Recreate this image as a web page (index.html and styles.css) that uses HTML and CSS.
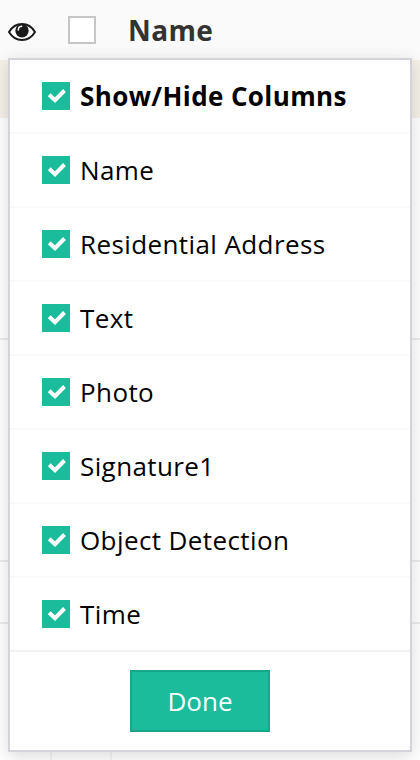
FILE: index.html
```html
<!DOCTYPE html>
<html lang="en">
<head>
<meta charset="utf-8">
<title>Columns</title>
<link rel="stylesheet" href="styles.css">
</head>
<body>
<div class="table">
  <div class="table-head">
    <svg class="eye" viewBox="0 0 28 20">
      <path d="M1 10C4 5 8.600 2 14 2s10 3 13 8c-3 5-7.600 8-13 8S4 15 1 10z" fill="#fff" stroke="#1b1b1b" stroke-width="2"/>
      <circle cx="14" cy="8.700" r="6.700" fill="#1b1b1b"/>
      <path d="M10.300 8c0-2.200 1.300-3.500 3.300-3.700" fill="none" stroke="#fff" stroke-width="1.500" stroke-linecap="round"/>
    </svg>
    <span class="box"></span>
    <span class="head-label">Name</span>
  </div>
  <div class="row row-selected"></div>
  <div class="row row-tall"></div>
  <div class="row row-tall"></div>
  <div class="row row-short"></div>
  <div class="row row-last"><span class="cell cell-first"></span><span class="cell"></span></div>
</div>
<div class="menu">
  <div class="item item-title"><span class="check"><svg viewBox="0 0 28 28"><path d="M7.200 12.800l5.800 5.400 9.500-9.700"/></svg></span>Show/Hide Columns</div>
  <div class="item"><span class="check"><svg viewBox="0 0 28 28"><path d="M7.200 12.800l5.800 5.400 9.500-9.700"/></svg></span>Name</div>
  <div class="item"><span class="check"><svg viewBox="0 0 28 28"><path d="M7.200 12.800l5.800 5.400 9.500-9.700"/></svg></span>Residential Address</div>
  <div class="item"><span class="check"><svg viewBox="0 0 28 28"><path d="M7.200 12.800l5.800 5.400 9.500-9.700"/></svg></span>Text</div>
  <div class="item"><span class="check"><svg viewBox="0 0 28 28"><path d="M7.200 12.800l5.800 5.400 9.500-9.700"/></svg></span>Photo</div>
  <div class="item"><span class="check"><svg viewBox="0 0 28 28"><path d="M7.200 12.800l5.800 5.400 9.500-9.700"/></svg></span>Signature1</div>
  <div class="item"><span class="check"><svg viewBox="0 0 28 28"><path d="M7.200 12.800l5.800 5.400 9.500-9.700"/></svg></span>Object Detection</div>
  <div class="item"><span class="check"><svg viewBox="0 0 28 28"><path d="M7.200 12.800l5.800 5.400 9.500-9.700"/></svg></span>Time</div>
  <div class="footer"><button class="done">Done</button></div>
</div>
</body>
</html>
```
FILE: styles.css
```css
* { box-sizing: border-box; }
body {
  margin: 0;
  height: 760px;
  overflow: hidden;
  background: #fff;
  font-family: "Open Sans", sans-serif;
  font-size: 26px;
  color: #000;
}
.table-head {
  display: flex;
  align-items: center;
  height: 60px;
  padding-left: 8px;
  background: #fafafa;
}
.eye { width: 28px; height: 20px; margin-top: 4px; }
.box {
  width: 28px;
  height: 28px;
  margin-left: 32px;
  border: 2px solid #c6c6c6;
  background: #fff;
}
.head-label {
  margin-left: 32px;
  font-size: 28px;
  font-weight: 700;
  letter-spacing: 0.4px;
  color: #333;
}
.row { border-bottom: 2px solid #ececee; }
.row-selected { height: 58px; background: #f5f0e8; border-bottom: 0; }
.row-tall { height: 222px; }
.row-short { height: 62px; }
.row-last { display: flex; height: 136px; border-bottom: 0; }
.cell { width: 60px; border-right: 2px solid #f5f5f6; }
.cell-first { width: 52px; }
.menu {
  position: absolute;
  left: 8px;
  top: 58px;
  width: 404px;
  height: 694px;
  border: 2px solid #d3d3d9;
  background: #fff;
  box-shadow: 0 4px 16px rgba(0, 0, 0, 0.15);
}
.item {
  display: flex;
  align-items: center;
  gap: 10px;
  height: 74px;
  padding-left: 32px;
  border-bottom: 2px solid #fafafa;
  letter-spacing: 0.4px;
  white-space: nowrap;
}
.item-title { font-weight: 700; }
.item:nth-child(8) { border-bottom-color: #f2f2f2; }
.check { width: 28px; height: 28px; background: #1abc9c; }
.check svg { display: block; width: 28px; height: 28px; }
.check path { fill: none; stroke: #fff; stroke-width: 4; }
.footer { padding: 18px 0 0 120px; }
.done {
  display: block;
  width: 140px;
  height: 62px;
  padding: 0;
  border: 2px solid #18a689;
  background: #1abc9c;
  color: #fff;
  font: inherit;
}
```
